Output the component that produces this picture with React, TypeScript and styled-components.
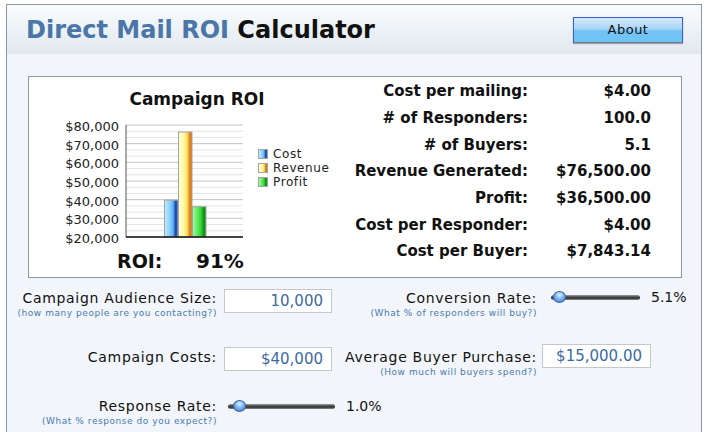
import styled, { createGlobalStyle } from "styled-components";

const GlobalStyle = createGlobalStyle`
  html, body {
    margin: 0;
    padding: 0;
    overflow: hidden;
    background: #ffffff;
  }
  body {
    font-family: "DejaVu Sans", Verdana, sans-serif;
    color: #111;
  }
`;

const Frame = styled.div`
  box-sizing: border-box;
  width: 696px;
  height: 440px;
  margin: 4px 0 0 6px;
  border: 1px solid #8a96a4;
  background: #f2f5f9;
`;

const Header = styled.header`
  height: 49px;
  display: flex;
  align-items: center;
  justify-content: space-between;
  padding: 0 18px 0 19px;
  background: linear-gradient(#f8fcfe, #e2e8ee);
`;

const Title = styled.h1`
  margin: 0;
  font-size: 24px;
  font-weight: bold;
  color: #111;
`;

const TitleAccent = styled.span`
  color: #4a76a8;
`;

const AboutButton = styled.button`
  box-sizing: border-box;
  width: 110px;
  height: 26px;
  padding: 0;
  border: 1px solid #3a5fcf;
  border-bottom-color: #6b7686;
  background: linear-gradient(#d3e9fb 0%, #a9d5f7 45%, #74c1f3 55%, #6cc6f7 100%);
  box-shadow: 0 1px 1px rgba(0, 0, 0, 0.3);
  font-family: "DejaVu Sans", Verdana, sans-serif;
  font-size: 13px;
  letter-spacing: 0.5px;
  color: #111;
`;

const Content = styled.main`
  padding-top: 22px;
`;

const ResultsBox = styled.section`
  box-sizing: border-box;
  height: 202px;
  margin: 0 19px 0 21px;
  display: flex;
  background: #ffffff;
  border: 1px solid #8e98a4;
`;

const ChartPanel = styled.div`
  width: 322px;
  display: flex;
  flex-direction: column;
`;

const ChartTitle = styled.h2`
  margin: 12px 0 0 14px;
  font-size: 17px;
  line-height: 20px;
  font-weight: bold;
  text-align: center;
`;

const ChartRow = styled.div`
  display: flex;
  align-items: flex-start;
  margin: 6px 0 0 31px;
`;

const ChartSvg = styled.svg`
  display: block;
  flex: none;
  overflow: visible;
  text {
    font-family: "DejaVu Sans", Verdana, sans-serif;
    font-size: 13px;
    fill: #222;
  }
`;

const Legend = styled.ul`
  list-style: none;
  margin: 32px 0 0 13px;
  padding: 0;
`;

const LegendItem = styled.li`
  display: flex;
  align-items: center;
  height: 14px;
  font-size: 12px;
  line-height: 14px;
  letter-spacing: 0.6px;
  color: #222;
  white-space: nowrap;
`;

const Swatch = styled.span<{ $fill: string }>`
  box-sizing: border-box;
  width: 10px;
  height: 10px;
  margin-right: 5px;
  border: 1px solid #a4a4a4;
  background: ${(p) => p.$fill};
`;

const RoiRow = styled.div`
  display: flex;
  margin-top: 4px;
  padding-left: 88px;
  font-weight: bold;
  font-size: 20px;
  line-height: 24px;
`;

const RoiLabel = styled.span`
  width: 79px;
  font-size: 19px;
`;

const StatsGrid = styled.div`
  flex: 1;
  display: grid;
  grid-template-columns: auto 123px;
  grid-auto-rows: 26.7px;
  align-content: start;
  align-items: center;
  justify-content: end;
  padding: 1px 30px 0 0;
  font-size: 15px;
  font-weight: bold;
`;

const StatLabel = styled.div`
  text-align: right;
  white-space: nowrap;
`;

const StatValue = styled.div`
  text-align: right;
  white-space: nowrap;
`;

const Form = styled.div`
  display: grid;
  grid-template-columns: 210px 121px 199px 1fr;
  grid-template-rows: 59px 49px 35px;
  margin-top: 11px;
`;

const FieldLabel = styled.div`
  text-align: right;
  white-space: nowrap;
`;

const Label = styled.div`
  font-size: 14px;
  line-height: 18px;
  letter-spacing: 0.7px;
  color: #111;
`;

const Hint = styled.div`
  font-size: 9px;
  line-height: 12px;
  letter-spacing: 0.55px;
  color: #4a7ab2;
`;

const ControlCell = styled.div<{ $inset: number; $shift?: number }>`
  display: flex;
  align-items: flex-start;
  padding-left: ${(p) => p.$inset}px;
  margin-top: ${(p) => p.$shift ?? 0}px;
`;

const TextBox = styled.input<{ $width: number }>`
  box-sizing: border-box;
  width: ${(p) => p.$width}px;
  height: 24px;
  padding: 0 8px;
  border: 1px solid #c4c8cd;
  background: #ffffff;
  text-align: right;
  font-family: "DejaVu Sans", Verdana, sans-serif;
  font-size: 15px;
  color: #3b6aa5;
  outline: none;
`;

const SliderWrap = styled.div`
  display: flex;
  align-items: center;
  height: 18px;
`;

const SliderRail = styled.div<{ $width: number }>`
  position: relative;
  width: ${(p) => p.$width}px;
  height: 5px;
  border-radius: 3px;
  background: linear-gradient(#a0a0a0, #4a4a4a 40%, #2e2e2e 60%, #8c8c8c);
`;

const SliderThumb = styled.div<{ $at: number }>`
  position: absolute;
  top: -4px;
  left: ${(p) => p.$at}px;
  box-sizing: border-box;
  width: 13px;
  height: 12px;
  border-radius: 50%;
  border: 1px solid #3a62a8;
  background: radial-gradient(circle at 50% 30%, #e0f0ff 0, #86bdf2 40%, #3574d6 100%);
`;

const SliderValue = styled.span`
  margin-left: 11px;
  font-size: 14px;
  color: #111;
`;

const Slider = ({ width, at, value }: { width: number; at: number; value: string }) => (
  <SliderWrap>
    <SliderRail $width={width}>
      <SliderThumb $at={at} />
    </SliderRail>
    <SliderValue>{value}</SliderValue>
  </SliderWrap>
);

// chart geometry, in svg units
const PLOT = { left: 66, right: 183, top: 10, bottom: 122 };
const yFor = (v: number) =>
  PLOT.bottom - ((v - 20000) / 60000) * (PLOT.bottom - PLOT.top);
const ticks = [80000, 70000, 60000, 50000, 40000, 30000, 20000];

const gradients: Record<string, [number, string][]> = {
  cost: [
    [0, "#c2ebff"],
    [0.35, "#8fd3fb"],
    [0.62, "#64b6f0"],
    [0.72, "#3f82d9"],
    [0.8, "#1d47ac"],
    [1, "#2b5ec3"],
  ],
  revenue: [
    [0, "#ffffdc"],
    [0.38, "#fff8a6"],
    [0.6, "#f8e66e"],
    [0.72, "#f0c040"],
    [0.8, "#e68820"],
    [1, "#d87012"],
  ],
  profit: [
    [0, "#a2f8a2"],
    [0.35, "#62ec62"],
    [0.6, "#38d838"],
    [0.74, "#22b422"],
    [0.84, "#0f8a1a"],
    [1, "#1c9c22"],
  ],
};

const cssGradient = (id: string) =>
  `linear-gradient(to right, ${gradients[id]
    .map(([o, c]) => `${c} ${o * 100}%`)
    .join(", ")})`;

const bars = [
  { id: "cost", label: "Cost", value: 40000, x: 104 },
  { id: "revenue", label: "Revenue", value: 76500, x: 118 },
  { id: "profit", label: "Profit", value: 36500, x: 132 },
];

const RoiChart = () => {
  const step = (PLOT.bottom - PLOT.top) / 6;
  const minor: number[] = [];
  for (let i = 0; i < 6; i++) {
    minor.push(PLOT.top + i * step + step / 3, PLOT.top + i * step + (2 * step) / 3);
  }
  return (
    <ChartRow>
      <ChartSvg width={185} height={130} viewBox="0 0 185 130">
        <defs>
          {Object.entries(gradients).map(([id, stops]) => (
            <linearGradient key={id} id={`g-${id}`} x1="0" y1="0" x2="1" y2="0">
              {stops.map(([o, c]) => (
                <stop key={o} offset={o} stopColor={c} />
              ))}
            </linearGradient>
          ))}
        </defs>
        {minor.map((y) => (
          <line key={y} x1={PLOT.left} x2={PLOT.right} y1={y} y2={y} stroke="#e4e4e4" />
        ))}
        {ticks.map((t) => (
          <line
            key={t}
            x1={PLOT.left}
            x2={PLOT.right}
            y1={yFor(t)}
            y2={yFor(t)}
            stroke="#c4c4c4"
          />
        ))}
        {ticks.map((t) => (
          <text key={t} x={59} y={yFor(t) + 6} textAnchor="end">
            ${t.toLocaleString("en-US")}
          </text>
        ))}
        <line x1={PLOT.left} x2={PLOT.left} y1={PLOT.top} y2={PLOT.bottom} stroke="#555" />
        {bars.map((b) => (
          <rect
            key={b.id}
            x={b.x + 0.5}
            y={yFor(b.value) + 0.5}
            width={13.5}
            height={PLOT.bottom - yFor(b.value) - 0.5}
            fill={`url(#g-${b.id})`}
            stroke="#a4a4a4"
          />
        ))}
        <line
          x1={PLOT.left}
          x2={PLOT.right}
          y1={PLOT.bottom}
          y2={PLOT.bottom}
          stroke="#111"
          strokeWidth={1.5}
        />
      </ChartSvg>
      <Legend>
        {bars.map((b) => (
          <LegendItem key={b.id}>
            <Swatch $fill={cssGradient(b.id)} />
            {b.label}
          </LegendItem>
        ))}
      </Legend>
    </ChartRow>
  );
};

const stats = [
  ["Cost per mailing:", "$4.00"],
  ["# of Responders:", "100.0"],
  ["# of Buyers:", "5.1"],
  ["Revenue Generated:", "$76,500.00"],
  ["Profit:", "$36,500.00"],
  ["Cost per Responder:", "$4.00"],
  ["Cost per Buyer:", "$7,843.14"],
];

const App = () => {
  return (
    <>
      <GlobalStyle />
      <Frame>
        <Header>
          <Title>
            <TitleAccent>Direct Mail ROI</TitleAccent> Calculator
          </Title>
          <AboutButton>About</AboutButton>
        </Header>
        <Content>
          <ResultsBox>
            <ChartPanel>
              <ChartTitle>Campaign ROI</ChartTitle>
              <RoiChart />
              <RoiRow>
                <RoiLabel>ROI:</RoiLabel>
                <span>91%</span>
              </RoiRow>
            </ChartPanel>
            <StatsGrid>
              {stats.flatMap(([label, value]) => [
                <StatLabel key={label}>{label}</StatLabel>,
                <StatValue key={label + "v"}>{value}</StatValue>,
              ])}
            </StatsGrid>
          </ResultsBox>

          <Form>
            <FieldLabel>
              <Label>Campaign Audience Size:</Label>
              <Hint>(how many people are you contacting?)</Hint>
            </FieldLabel>
            <ControlCell $inset={7}>
              <TextBox $width={108} readOnly value="10,000" />
            </ControlCell>
            <FieldLabel>
              <Label>Conversion Rate:</Label>
              <Hint>(What % of responders will buy?)</Hint>
            </FieldLabel>
            <ControlCell $inset={14} $shift={-1}>
              <Slider width={89} at={2} value="5.1%" />
            </ControlCell>

            <FieldLabel>
              <Label>Campaign Costs:</Label>
            </FieldLabel>
            <ControlCell $inset={7} $shift={-1}>
              <TextBox $width={108} readOnly value="$40,000" />
            </ControlCell>
            <FieldLabel>
              <Label>Average Buyer Purchase:</Label>
              <Hint>(How much will buyers spend?)</Hint>
            </FieldLabel>
            <ControlCell $inset={5} $shift={-4}>
              <TextBox $width={109} readOnly value="$15,000.00" />
            </ControlCell>

            <FieldLabel>
              <Label>Response Rate:</Label>
              <Hint>(What % response do you expect?)</Hint>
            </FieldLabel>
            <ControlCell $inset={11}>
              <Slider width={107} at={5} value="1.0%" />
            </ControlCell>
          </Form>
        </Content>
      </Frame>
    </>
  );
};

export default App;
